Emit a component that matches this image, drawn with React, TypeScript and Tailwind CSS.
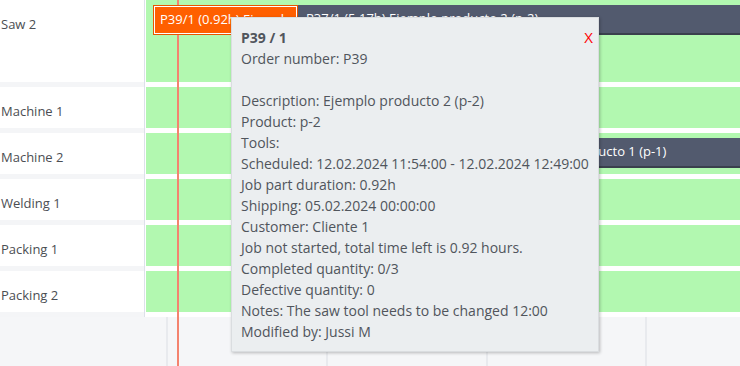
import React from 'react';

const rows = [
  { id: 1, name: 'Saw 2', height: 'h-[82px]' },
  { id: 2, name: 'Machine 1', height: 'h-[41px]' },
  { id: 3, name: 'Machine 2', height: 'h-[41px]' },
  { id: 4, name: 'Welding 1', height: 'h-[41px]' },
  { id: 5, name: 'Packing 1', height: 'h-[41px]' },
  { id: 6, name: 'Packing 2', height: 'h-[41px]' },
];

const tooltipLines = [
  'Order number: P39',
  '',
  'Description: Ejemplo producto 2 (p-2)',
  'Product: p-2',
  'Tools:',
  'Scheduled: 12.02.2024 11:54:00 - 12.02.2024 12:49:00',
  'Job part duration: 0.92h',
  'Shipping: 05.02.2024 00:00:00',
  'Customer: Cliente 1',
  'Job not started, total time left is 0.92 hours.',
  'Completed quantity: 0/3',
  'Defective quantity: 0',
  'Notes: The saw tool needs to be changed 12:00',
  'Modified by: Jussi M',
];

const JobBar = ({ label, className }: { label: string; className: string }) => (
  <div className={`absolute top-[5px] h-[30px] flex items-center overflow-hidden whitespace-nowrap text-[13px] text-white z-20 ${className}`}>
    {label}
  </div>
);

const App = () => {
  return (
    <div className="relative w-[740px] h-[366px] overflow-hidden bg-[#f5f6f8] font-['Open_Sans',sans-serif]">
      <div className="flex flex-col bg-white">
        {rows.map(row => (
          <div key={row.id} className="flex flex-col">
            <div className="flex">
              <div className={`w-[145px] shrink-0 bg-white border-r border-[#dde1ea] pl-[1px] pt-[14px] text-[13px] leading-[20px] text-[#4b4e53] ${row.height}`}>
                {row.name}
              </div>
              <div className={`relative flex-1 ml-px bg-[#b2f8b0] ${row.height}`}>
                {row.id === 1 && (
                  <>
                    <JobBar
                      label="P39/1 (0.92h) Ejemplo producto 2 (p-2)"
                      className="left-[7px] w-[145px] pl-[6px] bg-[#ff5f00] border border-[#e85500] shadow-[inset_0_0_0_1px_#ffffff]"
                    />
                    <JobBar
                      label="P37/1 (5.17h) Ejemplo producto 2 (p-2)"
                      className="left-[152px] w-[460px] pl-[8px] bg-[#525a6e] border-b-2 border-[#3a404d]"
                    />
                  </>
                )}
                {row.id === 3 && (
                  <JobBar
                    label="P38/1 (2.25h) Ejemplo producto 1 (p-1)"
                    className="left-[280px] w-[340px] pl-[8px] bg-[#525a6e] border-b-2 border-[#3a404d]"
                  />
                )}
              </div>
            </div>
            <div className="flex h-[5px]">
              <div className="w-[145px] shrink-0 bg-[#f4f5f7] border-r border-[#dde1ea]" />
              <div className="flex-1 bg-white" />
            </div>
          </div>
        ))}
      </div>

      <div className="flex h-[60px]">
        <div className="w-[168px] shrink-0 border-r-2 border-[#e8eaee]" />
        <div className="w-[160px] shrink-0 border-r-2 border-[#e8eaee]" />
        <div className="w-[160px] shrink-0 border-r-2 border-[#e8eaee]" />
        <div className="w-[159px] shrink-0 border-r-2 border-[#e8eaee]" />
        <div className="flex-1" />
      </div>

      <div className="absolute left-[177px] top-0 h-full w-[2px] bg-[#f4836f] z-10" />

      <div className="absolute left-[231px] top-[17px] w-[368px] h-[335px] z-30 bg-[#ebeef0] border border-[#dadde0] shadow-[1px_1px_3px_rgba(0,0,0,0.25)] pl-[9px] pr-[10px] pt-[9px] text-[14px] leading-[21px] text-[#50555c]">
        <div className="font-bold">P39 / 1</div>
        {tooltipLines.map((line, i) => (
          <div key={i} className="h-[21px] whitespace-nowrap">{line}</div>
        ))}
        <span className="absolute right-[5px] top-[9px] text-[15px] leading-[21px] text-[#ff0000]">X</span>
      </div>
    </div>
  );
};

export default App;
